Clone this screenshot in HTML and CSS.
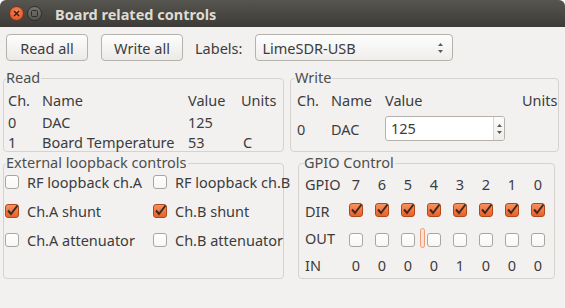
FILE: index.html
```html
<!DOCTYPE html>
<html lang="en">
<head>
    <meta charset="UTF-8">
    <title>Board related controls</title>
    <link rel="stylesheet" href="styles.css">
</head>
<body>
    <div class="window">
        <div class="titlebar">
            <span class="wbtn close">
                <svg width="7" height="7" viewBox="0 0 7 7"><path d="M1 1L6 6M6 1L1 6" stroke="#3a1a0e" stroke-width="1.4"/></svg>
            </span>
            <span class="wbtn max">
                <svg width="7" height="7" viewBox="0 0 7 7"><rect x="0.5" y="0.5" width="6" height="6" rx="1" fill="none" stroke="#2e2d29"/></svg>
            </span>
            <span class="title">Board related controls</span>
        </div>

        <div class="toolbar">
            <button class="btn">Read all</button>
            <button class="btn">Write all</button>
            <span class="lbl">Labels:</span>
            <div class="combo">
                <span class="combo-text">LimeSDR-USB</span>
                <svg class="updown" width="7" height="12" viewBox="0 0 7 12"><path d="M3.5 1L6 4H1z M3.5 11L6 8H1z" fill="#5a5a5a"/></svg>
            </div>
        </div>

        <div class="row top">
            <fieldset class="group read">
                <legend>Read</legend>
                <div class="read-grid">
                    <span>Ch.</span><span>Name</span><span>Value</span><span>Units</span>
                    <span>0</span><span>DAC</span><span>125</span><span></span>
                    <span>1</span><span>Board Temperature</span><span>53</span><span class="unit">C</span>
                </div>
            </fieldset>
            <fieldset class="group write">
                <legend>Write</legend>
                <div class="write-grid">
                    <span class="hd">Ch.</span><span class="hd">Name</span><span class="hd">Value</span><span class="hd">Units</span>
                    <span>0</span><span>DAC</span>
                    <div class="spin">
                        <span class="spin-val">125</span>
                        <span class="spin-btns">
                            <svg width="7" height="12" viewBox="0 0 7 12"><path d="M3.5 1L6 4H1z M3.5 11L6 8H1z" fill="#5a5a5a"/></svg>
                        </span>
                    </div>
                    <span></span>
                </div>
            </fieldset>
        </div>

        <div class="row bottom">
            <fieldset class="group loop">
                <legend>External loopback controls</legend>
                <div class="loop-grid">
                    <label class="chk"><span class="cb"></span>RF loopback ch.A</label>
                    <label class="chk"><span class="cb"></span>RF loopback ch.B</label>
                    <label class="chk"><span class="cb on"><svg width="14" height="14" viewBox="0 0 14 14"><path d="M3 6.5L6 10L12.5 1.5" fill="none" stroke="#3b2a22" stroke-width="2"/></svg></span>Ch.A shunt</label>
                    <label class="chk"><span class="cb on"><svg width="14" height="14" viewBox="0 0 14 14"><path d="M3 6.5L6 10L12.5 1.5" fill="none" stroke="#3b2a22" stroke-width="2"/></svg></span>Ch.B shunt</label>
                    <label class="chk"><span class="cb"></span>Ch.A attenuator</label>
                    <label class="chk"><span class="cb"></span>Ch.B attenuator</label>
                </div>
            </fieldset>
            <fieldset class="group gpio">
                <legend>GPIO Control</legend>
                <div class="gpio-grid" id="gpio"></div>
            </fieldset>
        </div>
    </div>

    <script>
        // Filas del control GPIO: encabezado, DIR, OUT, IN
        const grid = document.getElementById("gpio");
        const inputs = [0, 0, 0, 0, 1, 0, 0, 0];
        const check = '<svg width="14" height="14" viewBox="0 0 14 14"><path d="M3 6.5L6 10L12.5 1.5" fill="none" stroke="#3b2a22" stroke-width="2"/></svg>';

        function addCell(html, cls) {
            const el = document.createElement("span");
            if (cls) el.className = cls;
            el.innerHTML = html;
            grid.appendChild(el);
        }

        addCell("GPIO", "rowname");
        for (let i = 7; i >= 0; i--) addCell(String(i));

        addCell("DIR", "rowname");
        for (let i = 7; i >= 0; i--) addCell('<span class="cb on">' + check + '</span>');

        addCell("OUT", "rowname");
        for (let i = 7; i >= 0; i--) {
            const focus = i === 4 ? '<span class="focus"></span>' : '';
            addCell('<span class="cb-wrap">' + focus + '<span class="cb"></span></span>');
        }

        addCell("IN", "rowname");
        inputs.forEach(function (v) { addCell(String(v)); });
    </script>
</body>
</html>
```

FILE: styles.css
```css
* {
    box-sizing: border-box;
}

html {
    background: #ffffff;
}

body {
    margin: 0;
    font-family: "Noto Sans", "Open Sans", sans-serif;
    font-size: 14.5px;
    color: #3c3c3c;
}

.window {
    width: 565px;
    height: 308px;
    background: #f2f1f0;
    border-radius: 6px 6px 0 0;
    overflow: hidden;
}

/* Barra de titulo */
.titlebar {
    height: 27px;
    display: flex;
    align-items: center;
    padding-left: 9px;
    background: linear-gradient(#56554f, #3c3b37);
}

.wbtn {
    width: 15px;
    height: 15px;
    border-radius: 50%;
    display: flex;
    align-items: center;
    justify-content: center;
}

.wbtn.close {
    background: radial-gradient(circle at 50% 35%, #f7865c, #de4915);
    border: 1px solid #7e3417;
}

.wbtn.max {
    margin-left: 3px;
    background: linear-gradient(#76756f, #57564f);
    border: 1px solid #302f2b;
}

.title {
    margin-left: 13px;
    font-weight: bold;
    color: #dfdbd2;
    line-height: 27px;
    padding-top: 2px;
}

/* Botones superiores */
.toolbar {
    display: flex;
    align-items: center;
    gap: 13px;
    padding: 7px 0 0 6px;
}

.btn {
    width: 82px;
    height: 27px;
    padding: 0;
    font: inherit;
    color: inherit;
    border: 1px solid #b5b2ac;
    border-radius: 4px;
    background: linear-gradient(#fdfdfd, #ebeae8);
}

.lbl {
    margin-left: -1px;
}

.combo {
    width: 198px;
    height: 27px;
    display: flex;
    align-items: center;
    justify-content: space-between;
    padding: 0 8px 0 6px;
    border: 1px solid #b5b2ac;
    border-radius: 4px;
    background: linear-gradient(#fdfdfd, #efeeec);
}

/* Grupos */
.row {
    display: flex;
    align-items: stretch;
    padding-left: 3px;
}

.row.top {
    margin-top: 8px;
    gap: 6px;
}

.row.bottom {
    margin-top: 2px;
    gap: 14px;
}

.group {
    margin: 0;
    border: 1px solid #d6d3ce;
    border-radius: 4px;
    min-width: 0;
}

.group legend {
    padding: 0 1px 3px 0;
    line-height: 16px;
    color: #4e4e4e;
}

.read {
    width: 281px;
    padding: 3px 4px 0 4px;
}

.read legend {
    margin-left: -2px;
}

.write {
    width: 269px;
    padding: 3px 6px 0 6px;
}

.write legend {
    margin-left: -2px;
}

.loop {
    width: 281px;
    padding: 0 0 0 1px;
}

.loop legend {
    margin-left: 1px;
}

.gpio {
    width: 257px;
    padding: 0 0 0 6px;
}

.gpio legend {
    margin-left: -1px;
}

.read-grid {
    display: grid;
    grid-template-columns: 34px 146px 53px auto;
    grid-template-rows: 22px 20px 18px;
    line-height: 18px;
}

.unit {
    padding-left: 2px;
}

.write-grid {
    display: grid;
    grid-template-columns: 34px 54px 137px auto;
    grid-template-rows: 18px 27px;
    row-gap: 6px;
    align-items: center;
    line-height: 18px;
}

.spin {
    width: 120px;
    height: 25px;
    display: flex;
    border: 1px solid #b5b2ac;
    border-radius: 3px;
    background: #ffffff;
    overflow: hidden;
}

.spin-val {
    flex: 1;
    padding-left: 5px;
    line-height: 23px;
}

.spin-btns {
    width: 11px;
    display: flex;
    align-items: center;
    justify-content: center;
    border-left: 1px solid #d9d6d1;
    background: linear-gradient(#fbfbfb, #efeeec);
}

/* Casillas */
.loop-grid {
    display: grid;
    grid-template-columns: 148px auto;
    grid-template-rows: 20px 20px 20px;
    row-gap: 9px;
    align-items: center;
    margin-top: -1px;
}

.chk {
    display: flex;
    align-items: center;
    gap: 8px;
    white-space: nowrap;
}

.cb {
    width: 14px;
    height: 14px;
    flex: none;
    display: inline-block;
    border: 1px solid #a9a6a0;
    border-radius: 3px;
    background: linear-gradient(#ffffff, #f6f6f5);
}

.cb.on {
    border-color: #b1481a;
    background: linear-gradient(#f7925f, #e8612b);
    overflow: visible;
}

.cb svg {
    display: block;
    margin: -1px 0 0 -1px;
}

.gpio-grid {
    display: grid;
    grid-template-columns: 32px repeat(8, 14px);
    grid-template-rows: repeat(4, 27px);
    column-gap: 12px;
    justify-items: center;
    align-items: center;
    margin-top: -3px;
}

.gpio-grid .rowname {
    justify-self: start;
}

.cb-wrap {
    position: relative;
    display: block;
    height: 14px;
}

.focus {
    position: absolute;
    left: -7px;
    top: -3px;
    width: 5px;
    height: 20px;
    border: 1px solid #f09a76;
    border-radius: 3px;
    background: #fbe3d8;
}
```
